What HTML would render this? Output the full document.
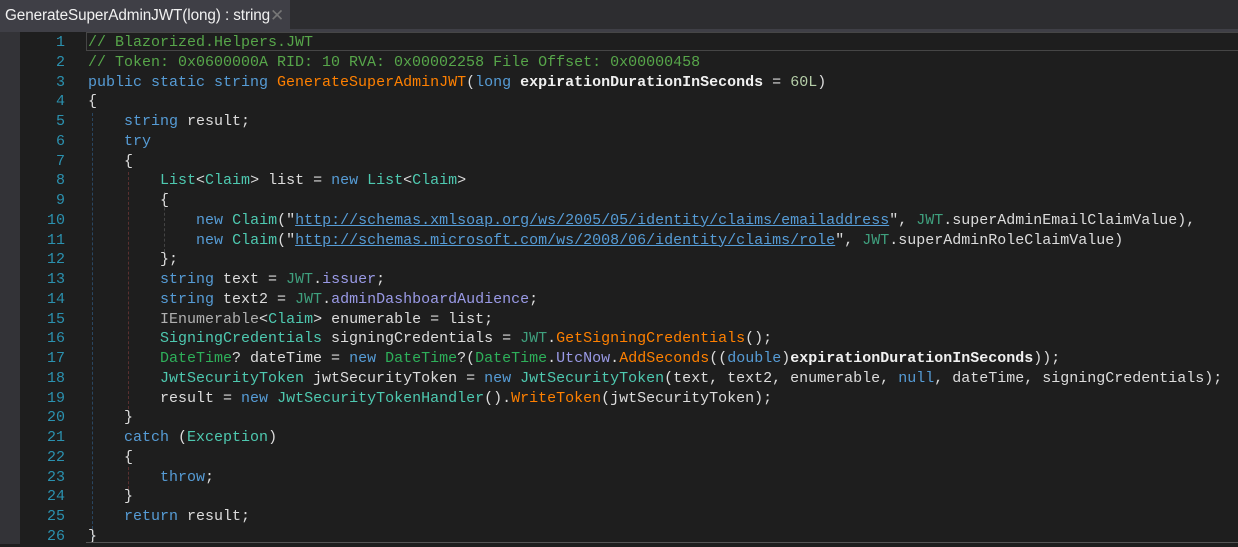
<!DOCTYPE html>
<html><head><meta charset="utf-8"><style>
html,body{margin:0;padding:0;background:#1e1e1e;width:1238px;height:544px;overflow:hidden;font-family:"Liberation Sans",sans-serif}
#bar{position:absolute;left:0;top:0;width:1238px;height:29px;background:#2d2d30}
#tab{position:absolute;left:0;top:0;width:290px;height:29px;background:#3f3f46;color:#f1f1f1;font-size:15.3px;line-height:31px;padding-left:5px;box-sizing:border-box;letter-spacing:-0.1px}
#tab .x{position:absolute;left:270px;top:0;color:#777;font-size:17px}
#strip{position:absolute;left:0;top:29px;width:1238px;height:3px;background:#3f3f46}
#gut{position:absolute;left:0;top:32px;width:20px;height:512px;background:#333337}
#hl{position:absolute;left:86px;top:32px;width:1160px;height:17px;border:1px solid #464646;background:#1e1e1e}
#code{position:absolute;left:0;top:33px;font-family:"Liberation Mono",monospace;font-size:15px;color:#dcdcdc}
.l{height:19.75px;line-height:19.75px;white-space:pre;position:relative}
.n{position:absolute;left:20px;width:45px;text-align:right;color:#2b91af}
.c0{position:absolute;left:88px}
.k{color:#569cd6}.t{color:#4ec9b0}.cm{color:#57a64a}.m{color:#ff8000}.p{font-weight:bold;color:#f0f0f0}
.j{color:#3fa07e}.f{color:#9a9ae6}.d{color:#2eb05a}.i{color:#b0b0b0}.u{color:#569cd6;text-decoration:underline}.num{color:#b5cea8}
.g{position:absolute;border-left:1px dashed}
</style></head><body>
<div id="bar"><div id="tab">GenerateSuperAdminJWT(long) : string<span class="x">✕</span></div></div>
<div id="strip"></div><div id="gut"></div><div id="hl"></div>
<div class="g" style="left:92px;top:113px;height:426px;border-color:#2a4660"></div>
<div class="g" style="left:128px;top:172px;height:237px;border-color:#5a3030"></div>
<div class="g" style="left:164px;top:192px;height:60px;border-color:#444"></div>
<div class="g" style="left:128px;top:467px;height:22px;border-color:#5a3030"></div>
<div id="code">
<div class="l"><span class="n">1</span><span class="c0 cm">// Blazorized.Helpers.JWT</span></div>
<div class="l"><span class="n">2</span><span class="c0 cm">// Token: 0x0600000A RID: 10 RVA: 0x00002258 File Offset: 0x00000458</span></div>
<div class="l"><span class="n">3</span><span class="c0"><span class="k">public static string</span> <span class="m">GenerateSuperAdminJWT</span>(<span class="k">long</span> <span class="p">expirationDurationInSeconds</span> = <span class="num">60L</span>)</span></div>
<div class="l"><span class="n">4</span><span class="c0">{</span></div>
<div class="l"><span class="n">5</span><span class="c0">    <span class="k">string</span> result;</span></div>
<div class="l"><span class="n">6</span><span class="c0">    <span class="k">try</span></span></div>
<div class="l"><span class="n">7</span><span class="c0">    {</span></div>
<div class="l"><span class="n">8</span><span class="c0">        <span class="t">List</span>&lt;<span class="t">Claim</span>&gt; list = <span class="k">new</span> <span class="t">List</span>&lt;<span class="t">Claim</span>&gt;</span></div>
<div class="l"><span class="n">9</span><span class="c0">        {</span></div>
<div class="l"><span class="n">10</span><span class="c0">            <span class="k">new</span> <span class="t">Claim</span>("<span class="u">http://schemas.xmlsoap.org/ws/2005/05/identity/claims/emailaddress</span>", <span class="j">JWT</span>.superAdminEmailClaimValue),</span></div>
<div class="l"><span class="n">11</span><span class="c0">            <span class="k">new</span> <span class="t">Claim</span>("<span class="u">http://schemas.microsoft.com/ws/2008/06/identity/claims/role</span>", <span class="j">JWT</span>.superAdminRoleClaimValue)</span></div>
<div class="l"><span class="n">12</span><span class="c0">        };</span></div>
<div class="l"><span class="n">13</span><span class="c0">        <span class="k">string</span> text = <span class="j">JWT</span>.<span class="f">issuer</span>;</span></div>
<div class="l"><span class="n">14</span><span class="c0">        <span class="k">string</span> text2 = <span class="j">JWT</span>.<span class="f">adminDashboardAudience</span>;</span></div>
<div class="l"><span class="n">15</span><span class="c0">        <span class="i">IEnumerable</span>&lt;<span class="t">Claim</span>&gt; enumerable = list;</span></div>
<div class="l"><span class="n">16</span><span class="c0">        <span class="t">SigningCredentials</span> signingCredentials = <span class="j">JWT</span>.<span class="m">GetSigningCredentials</span>();</span></div>
<div class="l"><span class="n">17</span><span class="c0">        <span class="d">DateTime</span>? dateTime = <span class="k">new</span> <span class="d">DateTime</span>?(<span class="d">DateTime</span>.<span class="f">UtcNow</span>.<span class="m">AddSeconds</span>((<span class="k">double</span>)<span class="p">expirationDurationInSeconds</span>));</span></div>
<div class="l"><span class="n">18</span><span class="c0">        <span class="t">JwtSecurityToken</span> jwtSecurityToken = <span class="k">new</span> <span class="t">JwtSecurityToken</span>(text, text2, enumerable, <span class="k">null</span>, dateTime, signingCredentials);</span></div>
<div class="l"><span class="n">19</span><span class="c0">        result = <span class="k">new</span> <span class="t">JwtSecurityTokenHandler</span>().<span class="m">WriteToken</span>(jwtSecurityToken);</span></div>
<div class="l"><span class="n">20</span><span class="c0">    }</span></div>
<div class="l"><span class="n">21</span><span class="c0">    <span class="k">catch</span> (<span class="t">Exception</span>)</span></div>
<div class="l"><span class="n">22</span><span class="c0">    {</span></div>
<div class="l"><span class="n">23</span><span class="c0">        <span class="k">throw</span>;</span></div>
<div class="l"><span class="n">24</span><span class="c0">    }</span></div>
<div class="l"><span class="n">25</span><span class="c0">    <span class="k">return</span> result;</span></div>
<div class="l"><span class="n">26</span><span class="c0">}</span></div>
</div>
<div style="position:absolute;left:86px;top:542px;width:1152px;height:1px;background:#555"></div>
</body></html>
